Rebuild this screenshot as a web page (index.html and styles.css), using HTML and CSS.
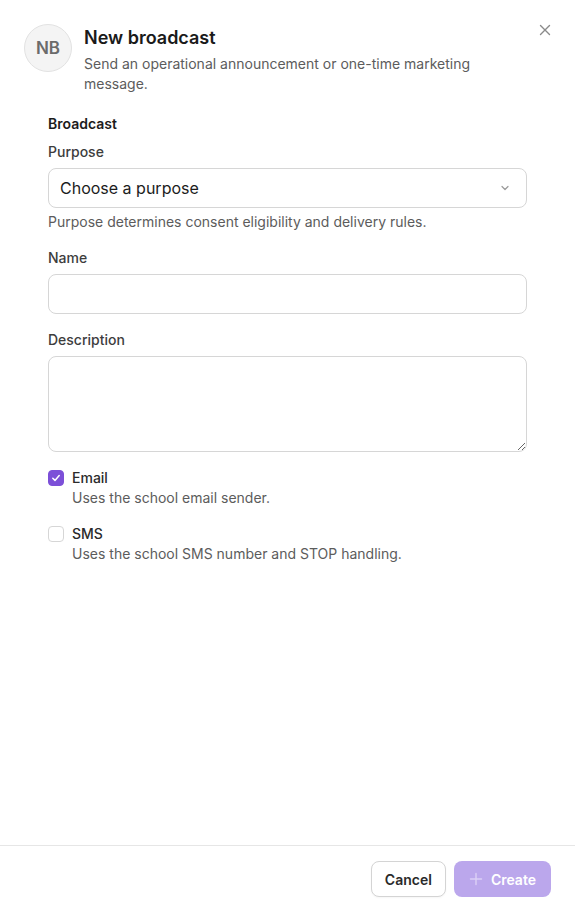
FILE: index.html
```html
<!DOCTYPE html>
<html lang="en">
  <head>
    <meta charset="UTF-8" />
    <meta name="viewport" content="width=device-width, initial-scale=1.0" />
    <title>New broadcast</title>
    <link rel="stylesheet" href="styles.css">
  </head>

  <body>
    <div class="dialog">
      <div class="dialog-body">
        <header class="dialog-header">
          <div class="avatar">NB</div>
          <div class="heading">
            <h1>New broadcast</h1>
            <p>Send an operational announcement or one-time marketing message.</p>
          </div>
          <button type="button" class="close" aria-label="Close">
            <svg width="12" height="12" viewBox="0 0 12 12">
              <path d="M1.5 1.5l9 9M10.5 1.5l-9 9" stroke="currentColor" stroke-width="1.4" stroke-linecap="round" />
            </svg>
          </button>
        </header>

        <form class="form" id="broadcastForm">
          <h2>Broadcast</h2>

          <div class="field field-first">
            <label for="purpose">Purpose</label>
            <div class="select">
              <span>Choose a purpose</span>
              <svg width="12" height="12" viewBox="0 0 12 12">
                <path d="M3 4.5l3 3 3-3" fill="none" stroke="currentColor" stroke-width="1.2" stroke-linecap="round" stroke-linejoin="round" />
              </svg>
            </div>
            <p class="hint">Purpose determines consent eligibility and delivery rules.</p>
          </div>

          <div class="field">
            <label for="name">Name</label>
            <input type="text" id="name" name="name" autocomplete="off" />
          </div>

          <div class="field">
            <label for="description">Description</label>
            <textarea id="description" name="description"></textarea>
          </div>

          <div class="channels">
            <label class="channel">
              <span class="box checked">
                <svg width="12" height="12" viewBox="0 0 12 12">
                  <path d="M2.8 6.2l2.2 2.2 4.2-4.8" fill="none" stroke="#fff" stroke-width="1.5" stroke-linecap="round" stroke-linejoin="round" />
                </svg>
              </span>
              <span class="channel-text">
                <span class="channel-name">Email</span>
                <span class="channel-hint">Uses the school email sender.</span>
              </span>
            </label>
            <label class="channel">
              <span class="box"></span>
              <span class="channel-text">
                <span class="channel-name">SMS</span>
                <span class="channel-hint">Uses the school SMS number and STOP handling.</span>
              </span>
            </label>
          </div>
        </form>
      </div>

      <footer class="dialog-footer">
        <button type="button" class="btn btn-secondary">Cancel</button>
        <button type="submit" form="broadcastForm" class="btn btn-primary" disabled>
          <svg width="14" height="14" viewBox="0 0 14 14">
            <path d="M7 1.5v11M1.5 7h11" stroke="currentColor" stroke-width="1.4" stroke-linecap="round" />
          </svg>
          Create
        </button>
      </footer>
    </div>
  </body>
</html>
```

FILE: styles.css
```css
* {
  padding: 0;
  margin: 0;
  box-sizing: border-box;
}

body {
  font-family: Inter, "Noto Sans", sans-serif;
  color: #1c1c1c;
  background-color: #ffffff;
}

.dialog {
  display: flex;
  flex-direction: column;
  min-height: 913px;
}

.dialog-body {
  flex: 1;
}

.dialog-header {
  display: flex;
  gap: 12px;
  padding: 24px 24px 0;
  position: relative;
}

.avatar {
  flex: none;
  width: 48px;
  height: 48px;
  border-radius: 50%;
  background-color: #f4f4f4;
  border: 1px solid #e2e2e2;
  display: flex;
  justify-content: center;
  align-items: center;
  font-size: 17px;
  font-weight: 600;
  color: #6b6b6b;
}

.heading {
  padding-right: 76px;
}

h1 {
  font-size: 18px;
  line-height: 28px;
  font-weight: 600;
  color: #1a1a1a;
}

.heading p {
  margin-top: 2px;
  font-size: 14px;
  line-height: 20px;
  color: #5c5c5c;
}

.close {
  position: absolute;
  top: 24px;
  right: 24px;
  width: 12px;
  height: 12px;
  border: none;
  background: none;
  color: #8a8a8a;
  cursor: pointer;
}

.close svg {
  display: block;
}

.form {
  padding: 20px 48px 0;
}

h2 {
  font-size: 14px;
  line-height: 20px;
  font-weight: 600;
  color: #1c1c1c;
}

.field {
  display: flex;
  flex-direction: column;
  margin-top: 16px;
}

.field-first {
  margin-top: 8px;
}

.field label {
  font-size: 14px;
  line-height: 20px;
  font-weight: 500;
  color: #3d3d3d;
  margin-bottom: 6px;
}

.select,
input[type="text"],
textarea {
  width: 100%;
  border: 1px solid #d6d6d6;
  border-radius: 8px;
  background-color: #ffffff;
  font-family: inherit;
  outline: none;
}

.select {
  height: 40px;
  padding: 0 15px 0 11px;
  display: flex;
  align-items: center;
  justify-content: space-between;
  font-size: 16px;
  color: #1c1c1c;
}

.select svg {
  color: #9a9a9a;
}

input[type="text"] {
  height: 40px;
  padding: 0 12px;
  font-size: 16px;
}

textarea {
  height: 96px;
  padding: 8px 12px;
  font-size: 16px;
  resize: vertical;
  display: block;
}

.hint {
  margin-top: 4px;
  font-size: 14px;
  line-height: 20px;
  color: #5c5c5c;
}

.channels {
  display: flex;
  flex-direction: column;
  gap: 16px;
  margin-top: 16px;
}

.channel {
  display: flex;
  gap: 8px;
}

.box {
  flex: none;
  width: 16px;
  height: 16px;
  margin-top: 2px;
  border: 1px solid #d6d6d6;
  border-radius: 4px;
  background-color: #ffffff;
  display: flex;
  justify-content: center;
  align-items: center;
}

.box.checked {
  background-color: #7c4fd8;
  border-color: #7c4fd8;
}

.channel-text {
  display: flex;
  flex-direction: column;
}

.channel-name {
  font-size: 14px;
  line-height: 20px;
  font-weight: 500;
  color: #2b2b2b;
}

.channel-hint {
  font-size: 14px;
  line-height: 20px;
  color: #5c5c5c;
}

.dialog-footer {
  border-top: 1px solid #e6e6e6;
  padding: 15px 24px 16px;
  display: flex;
  justify-content: flex-end;
  gap: 8px;
}

.btn {
  height: 36px;
  border-radius: 8px;
  font-family: inherit;
  font-size: 14px;
  font-weight: 600;
  display: flex;
  align-items: center;
  gap: 8px;
  cursor: pointer;
}

.btn-secondary {
  padding: 0 13px;
  border: 1px solid #d4d4d4;
  background-color: #ffffff;
  color: #2a2a2a;
  box-shadow: 0 1px 2px rgba(0, 0, 0, 0.04);
}

.btn-primary {
  padding: 0 15px;
  border: none;
  background-color: #bba7ec;
  color: #ffffff;
}

.btn-primary svg {
  color: #dcd0f6;
}
```
